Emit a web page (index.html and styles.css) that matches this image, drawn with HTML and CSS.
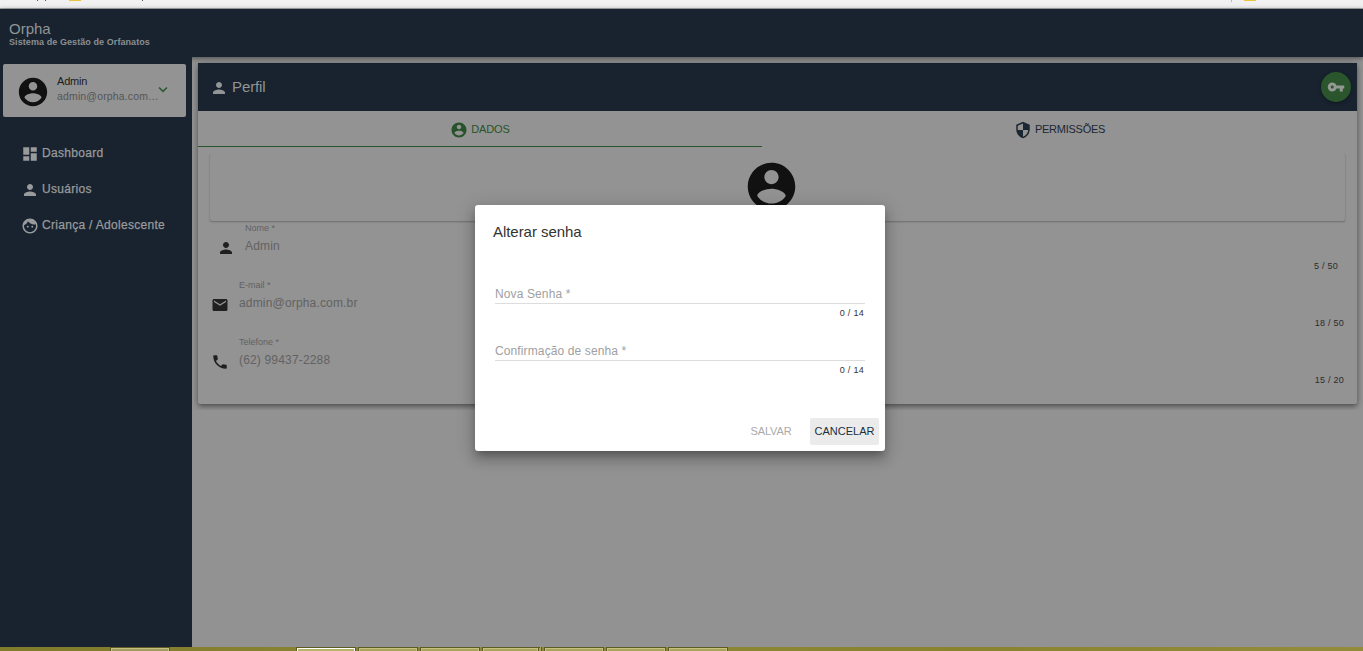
FILE: index.html
```html
<!DOCTYPE html>
<html lang="pt-BR">
<head>
<meta charset="utf-8">
<title>Orpha</title>
<link rel="stylesheet" href="styles.css">
</head>
<body>
<svg class="defs" width="0" height="0">
  <symbol id="person" viewBox="0 0 24 24"><path d="M12 12c2.21 0 4-1.79 4-4s-1.79-4-4-4-4 1.79-4 4 1.79 4 4 4zm0 2c-2.67 0-8 1.34-8 4v2h16v-2c0-2.66-5.33-4-8-4z"/></symbol>
  <symbol id="account" viewBox="0 0 24 24"><path d="M12 2C6.48 2 2 6.48 2 12s4.48 10 10 10 10-4.48 10-10S17.52 2 12 2zm0 3c1.66 0 3 1.34 3 3s-1.34 3-3 3-3-1.34-3-3 1.34-3 3-3zm0 14.2c-2.5 0-4.71-1.28-6-3.22.03-1.99 4-3.08 6-3.08 1.99 0 5.97 1.09 6 3.08-1.29 1.94-3.5 3.22-6 3.22z"/></symbol>
  <symbol id="dashboard" viewBox="0 0 24 24"><path d="M3 13h8V3H3v10zm0 8h8v-6H3v6zm10 0h8V11h-8v10zm0-18v6h8V3h-8z"/></symbol>
  <symbol id="face" viewBox="0 0 24 24"><path d="M9 11.75c-.69 0-1.25.56-1.25 1.25s.56 1.25 1.25 1.25 1.25-.56 1.25-1.25-.56-1.25-1.25-1.25zm6 0c-.69 0-1.25.56-1.25 1.25s.56 1.25 1.25 1.25 1.25-.56 1.25-1.25-.56-1.25-1.25-1.25zM12 2C6.48 2 2 6.48 2 12s4.48 10 10 10 10-4.48 10-10S17.52 2 12 2zm0 18c-4.41 0-8-3.59-8-8 0-.29.02-.58.05-.86 2.36-1.05 4.23-2.98 5.21-5.37C11.07 8.33 14.05 10 17.42 10c.78 0 1.53-.09 2.25-.26.21.71.33 1.47.33 2.26 0 4.41-3.59 8-8 8z"/></symbol>
  <symbol id="security" viewBox="0 0 24 24"><path d="M12 1L3 5v6c0 5.55 3.84 10.74 9 12 5.16-1.26 9-6.45 9-12V5l-9-4zm0 10.99h7c-.53 4.12-3.28 7.79-7 8.94V12H5V6.3l7-3.11v8.8z"/></symbol>
  <symbol id="key" viewBox="0 0 24 24"><path d="M12.65 10C11.83 7.67 9.61 6 7 6c-3.31 0-6 2.69-6 6s2.69 6 6 6c2.61 0 4.83-1.67 5.65-4H17v4h4v-4h2v-4H12.65zM7 14c-1.1 0-2-.9-2-2s.9-2 2-2 2 .9 2 2-.9 2-2 2z"/></symbol>
  <symbol id="email" viewBox="0 0 24 24"><path d="M20 4H4c-1.1 0-1.99.9-1.99 2L2 18c0 1.1.9 2 2 2h16c1.1 0 2-.9 2-2V6c0-1.1-.9-2-2-2zm0 4l-8 5-8-5V6l8 5 8-5v2z"/></symbol>
  <symbol id="phone" viewBox="0 0 24 24"><path d="M6.62 10.79c1.44 2.83 3.76 5.14 6.59 6.59l2.2-2.2c.27-.27.67-.36 1.02-.24 1.12.37 2.33.57 3.57.57.55 0 1 .45 1 1V20c0 .55-.45 1-1 1-9.39 0-17-7.61-17-17 0-.55.45-1 1-1h3.5c.55 0 1 .45 1 1 0 1.25.2 2.45.57 3.57.11.35.03.74-.25 1.02l-2.2 2.2z"/></symbol>
  <symbol id="chevron" viewBox="0 0 24 24"><path d="M7.41 7.84L12 12.42l4.59-4.58L18 9.25l-6 6-6-6z"/></symbol>
</svg>

<div class="screen">
  <div class="browser-bar">
    <i class="tick tick-a"></i><i class="tick tick-b"></i><i class="folder folder-a"></i><i class="tick tick-c"></i>
    <i class="divider"></i><i class="folder folder-b"></i>
  </div>
  <header class="topbar">
    <div class="brand">Orpha</div>
    <div class="tagline">Sistema de Gestão de Orfanatos</div>
  </header>
  <div class="body">
    <nav class="sidebar">
      <div class="user-card">
        <svg class="user-avatar"><use href="#account"/></svg>
        <div class="user-text">
          <div class="user-name">Admin</div>
          <div class="user-mail">admin@orpha.com…</div>
        </div>
        <svg class="user-chevron"><use href="#chevron"/></svg>
      </div>
      <ul class="menu">
        <li class="menu-item"><svg class="icon"><use href="#dashboard"/></svg><span>Dashboard</span></li>
        <li class="menu-item"><svg class="icon"><use href="#person"/></svg><span>Usuários</span></li>
        <li class="menu-item"><svg class="icon"><use href="#face"/></svg><span>Criança / Adolescente</span></li>
      </ul>
    </nav>
    <main class="main">
      <div class="content">
        <section class="card">
          <div class="card-head">
            <svg class="icon"><use href="#person"/></svg>
            <h1 class="card-title">Perfil</h1>
            <button class="fab"><svg class="icon"><use href="#key"/></svg></button>
          </div>
          <div class="tabs">
            <div class="tab tab-active"><svg class="icon"><use href="#account"/></svg><span>DADOS</span></div>
            <div class="tab"><svg class="icon"><use href="#security"/></svg><span class="tab-long">PERMISSÕES</span></div>
          </div>
          <div class="tab-body">
            <div class="photo"><svg class="photo-icon"><use href="#account"/></svg></div>
            <div class="field field-inset">
              <svg class="icon"><use href="#person"/></svg>
              <div class="field-text"><div class="label">Nome *</div><div class="value">Admin</div></div>
              <div class="count">5 / 50</div>
            </div>
            <div class="field">
              <svg class="icon"><use href="#email"/></svg>
              <div class="field-text"><div class="label">E-mail *</div><div class="value">admin@orpha.com.br</div></div>
              <div class="count">18 / 50</div>
            </div>
            <div class="field">
              <svg class="icon"><use href="#phone"/></svg>
              <div class="field-text"><div class="label">Telefone *</div><div class="value">(62) 99437-2288</div></div>
              <div class="count">15 / 20</div>
            </div>
          </div>
        </section>
      </div>
    </main>
  </div>
  <footer class="taskbar">
    <i class="task task-dim"></i>
    <i class="task task-current"></i><i class="task"></i><i class="task"></i><i class="task task-stack"></i><i class="task"></i><i class="task"></i><i class="task"></i>
  </footer>
  <div class="dialog">
    <h2 class="dialog-title">Alterar senha</h2>
    <div class="entry"><div class="entry-label">Nova Senha *</div><div class="entry-count">0 / 14</div></div>
    <div class="entry"><div class="entry-label">Confirmação de senha *</div><div class="entry-count">0 / 14</div></div>
    <div class="actions">
      <button class="btn btn-disabled">SALVAR</button>
      <button class="btn btn-focus">CANCELAR</button>
    </div>
  </div>
</div>
</body>
</html>
```

FILE: styles.css
```css
* { box-sizing: border-box; }
body {
  margin: 0;
  font-family: "Liberation Sans", Arial, sans-serif;
  font-size: 12px;
  overflow: hidden;
}
h1, h2, ul { margin: 0; padding: 0; font-weight: 400; }
ul { list-style: none; }
button { border: 0; padding: 0; font-family: inherit; }
svg { fill: currentColor; flex: none; display: block; }
.defs { position: absolute; }
.icon { width: 18px; height: 18px; }

.screen {
  position: relative;
  width: 1363px;
  height: 651px;
  display: flex;
  flex-direction: column;
  background: #929292;
  overflow: hidden;
}

.browser-bar {
  height: 9px;
  flex: none;
  display: flex;
  align-items: flex-start;
  background: #f1f1f1;
  border-bottom: 1px solid #aeaeb0;
}
.tick { width: 1px; height: 1px; background: #55556a; }
.tick-a { margin-left: 37px; }
.tick-b { margin-left: 7px; }
.tick-c { margin-left: 61px; }
.folder { width: 12px; height: 1px; background: #ecc540; }
.folder-a { margin-left: 23px; }
.divider { width: 1px; height: 2px; margin-left: 1088px; background: #bbb; }
.folder-b { margin-left: 12px; }

.topbar {
  position: relative;
  z-index: 2;
  height: 48px;
  flex: none;
  padding: 12px 9px 0;
  background: #18232f;
  box-shadow: 0 1px 5px rgba(0, 0, 0, .5);
}
.brand { font-size: 15px; line-height: 16px; color: #929496; }
.tagline { font-size: 9px; line-height: 10px; font-weight: 700; letter-spacing: .08px; color: #8b8f92; }

.body { flex: 1; display: flex; min-height: 0; }
.sidebar { position: relative; z-index: 3; width: 192px; flex: none; padding: 7px 6px 0 3px; background: #18232f; }
.user-card {
  height: 53px;
  display: flex;
  align-items: center;
  padding: 2px 0 0 13px;
  border-radius: 2px;
  background: #939393;
  color: #111;
}
.user-avatar { width: 34px; height: 34px; }
.user-text { width: 102px; margin: -5px 0 0 7px; white-space: nowrap; }
.user-name { font-size: 11px; line-height: 15px; letter-spacing: -.2px; color: #1c1c1c; }
.user-mail { font-size: 10.5px; line-height: 15px; letter-spacing: .15px; color: #555; }
.user-chevron { width: 18px; height: 18px; margin: -4px 0 0 -5px; color: #275a35; }
.menu { padding-top: 18px; }
.menu-item {
  height: 36px;
  display: flex;
  align-items: center;
  gap: 3px;
  padding-left: 18px;
  color: #989a9c;
  letter-spacing: .3px;
  white-space: nowrap;
}
.menu-item .icon { margin-top: 2px; }
.menu-item span { -webkit-text-stroke: .25px currentColor; }

.main { flex: 1; min-width: 0; }
.content { height: 353px; padding: 6px; overflow: hidden; }
.card {
  width: 1159px;
  height: 341px;
  border-radius: 2px;
  background: #939393;
  box-shadow: 0 2px 4px -1px rgba(0, 0, 0, .25), 0 3px 5px rgba(0, 0, 0, .2), 0 1px 10px rgba(0, 0, 0, .18);
}
.card-head {
  height: 48px;
  display: flex;
  align-items: center;
  padding: 0 6px 0 12px;
  background: #18232f;
  color: #929496;
}
.card-head > .icon { margin-top: 2px; }
.card-title { margin-left: 4px; font-size: 15px; line-height: 18px; letter-spacing: -.1px; }
.fab {
  width: 30px;
  height: 30px;
  margin-left: auto;
  display: grid;
  place-items: center;
  border-radius: 50%;
  background: #2a552d;
  color: #939893;
  box-shadow: 0 1px 4px rgba(0, 0, 0, .35);
}
.tabs { height: 36px; display: flex; font-size: 11px; color: #1b2733; }
.tab { width: 564px; display: flex; align-items: center; justify-content: center; gap: 3px; }
.tab + .tab { flex: 1; }
.tab .icon { margin-top: 2px; }
.tab-active { color: #27532a; box-shadow: inset 0 -1px #28552b; letter-spacing: -.15px; }
.tab-long { letter-spacing: -.25px; }
.tab-body { height: 257px; padding: 7px 12px 0; clip-path: inset(7px 0 0 0); }
.photo {
  height: 67px;
  display: flex;
  justify-content: center;
  padding: 4px 12px 0 0;
  border-radius: 2px;
  color: #111;
  box-shadow: 0 1px 2px rgba(0, 0, 0, .25), 0 0 1px rgba(0, 0, 0, .15);
}
.photo-icon { width: 57px; height: 57px; }
.field { height: 57px; display: flex; align-items: flex-start; padding: 0 1px; color: #202020; }
.field > .icon { margin-top: 18px; }
.field-inset { padding: 0 7px; }
.field-text { flex: 1; margin-left: 10px; }
.label { padding-top: 2px; font-size: 9px; line-height: 11px; color: #626262; }
.value { padding-top: 5px; line-height: 14px; letter-spacing: .17px; color: #626262; }
.count { margin-top: 40px; font-size: 9px; line-height: 11px; letter-spacing: .25px; color: #2b2b2b; }

.taskbar {
  position: relative;
  z-index: 4;
  height: 4px;
  flex: none;
  display: flex;
  gap: 2px;
  padding-left: 110px;
  background: linear-gradient(90deg, #807a2b, #8d8937 40%, #89832e 70%, #938c3b);
}
.task { width: 60px; height: 4px; border: 1px solid #5d5a24; border-bottom: 0; background: #a9a65c; box-shadow: inset 0 1px #c3c17f, inset 1px 0 #c3c17f, inset -1px 0 #c3c17f; }
.task-dim { margin-right: 124px; background: #a29c63; }
.task-current { background: #b8b56b; box-shadow: inset 0 1px #fff, inset 1px 0 #fff, inset -1px 0 #fff; }
.task-stack { border-right: 4px double #5d5a24; }

.dialog {
  position: absolute;
  z-index: 5;
  left: 475px;
  top: 205px;
  width: 410px;
  height: 246px;
  padding: 18px 20px 0;
  border-radius: 3px;
  background: #fff;
  box-shadow: 0 5px 7px -3px rgba(0, 0, 0, .25), 0 8px 12px 1px rgba(0, 0, 0, .16), 0 4px 18px 3px rgba(0, 0, 0, .14);
}
.dialog-title { margin: 0 0 53px -2px; font-size: 15px; line-height: 18px; letter-spacing: -.05px; color: #333; }
.entry { height: 57px; }
.entry-label { height: 10px; line-height: 0; letter-spacing: .12px; color: #a0a0a0; border-bottom: 1px solid #ddd; }
.entry-count { margin-top: 4px; padding-right: 1px; font-size: 9px; line-height: 11px; letter-spacing: .3px; text-align: right; color: #333; }
.actions { display: flex; justify-content: flex-end; gap: 9px; margin: 10px -14px 0 0; }
.btn { height: 27px; padding-bottom: 2px; font-size: 11px; border-radius: 2px; background: none; }
.btn-disabled { width: 60px; letter-spacing: -.15px; color: #aaa; }
.btn-focus { width: 69px; background: #ebebeb; color: #20303f; }
```
